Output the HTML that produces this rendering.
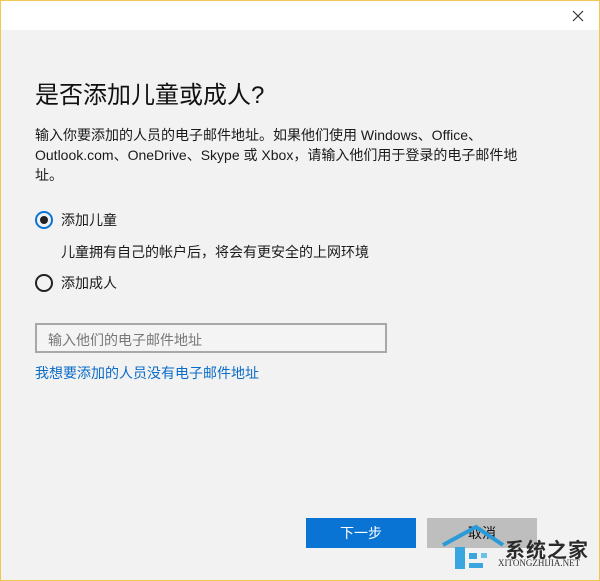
<!DOCTYPE html>
<html><head><meta charset="utf-8"><style>
*{margin:0;padding:0;box-sizing:border-box}
html,body{width:600px;height:581px;overflow:hidden}
body{background:#f2f2f2;font-family:"Liberation Sans","Noto Sans CJK SC",sans-serif;color:#1a1a1a;position:relative;border:1px solid #f0c850}
.bar{position:absolute;left:0;top:0;width:598px;height:29px;background:#fff}
.t{position:absolute;left:34px;top:74px;font-size:24px;color:#111}
.p{position:absolute;left:34px;top:124px;width:500px;font-size:14px;line-height:20px}
.r{position:absolute;left:34px;width:18px;height:18px;border:2px solid #222;border-radius:50%}
.r.on{border-color:#0a74d4}
.r.on::after{content:"";position:absolute;left:3px;top:3px;width:8px;height:8px;border-radius:50%;background:#222}
.l{position:absolute;font-size:14px}
.in{position:absolute;left:34px;top:322px;width:352px;height:30px;border:2px solid #a8a8a8;background:#f4f4f4;font-size:14px;color:#777;padding:5px 0 0 11px}
.lk{position:absolute;left:34px;top:362px;font-size:14px;color:#0a6cc8}
.b1{position:absolute;left:305px;top:517px;width:110px;height:30px;background:#0a74d4;color:#fff;font-size:14px;text-align:center;line-height:30px}
.b2{position:absolute;left:426px;top:517px;width:110px;height:30px;background:#bebebe;color:#111;font-size:14px;text-align:center;line-height:30px}
.wm1{position:absolute;left:504px;top:533px;font-size:20px;font-weight:bold;color:#2a2a2a;letter-spacing:1px}
.wm2{position:absolute;left:497px;top:557px;font-size:9px;color:#333;font-family:"Liberation Serif",serif}
</style></head><body>
<div class="bar"></div>
<svg style="position:absolute;left:571px;top:9px" width="12" height="12"><path d="M1 1L11 11M11 1L1 11" stroke="#333" stroke-width="1.2"/></svg>
<div class="t">是否添加儿童或成人?</div>
<div class="p">输入你要添加的人员的电子邮件地址。如果他们使用 Windows、Office、Outlook.com、OneDrive、Skype 或 Xbox，请输入他们用于登录的电子邮件地址。</div>
<div class="r on" style="top:210px"></div>
<div class="l" style="left:60px;top:209px">添加儿童</div>
<div class="l" style="left:60px;top:241px">儿童拥有自己的帐户后，将会有更安全的上网环境</div>
<div class="r" style="top:273px"></div>
<div class="l" style="left:60px;top:272px">添加成人</div>
<div class="in">输入他们的电子邮件地址</div>
<div class="lk">我想要添加的人员没有电子邮件地址</div>
<div class="b1">下一步</div>
<div class="b2">取消</div>
<svg style="position:absolute;left:440px;top:522px" width="70" height="55"><path d="M2 22 L35 4 L62 22" fill="none" stroke="#2a9ad8" stroke-width="4"/><rect x="14" y="24" width="10" height="22" fill="#3aa6e0"/><rect x="28" y="30" width="8" height="6" fill="#3aa6e0"/><rect x="40" y="30" width="6" height="5" fill="#6cc0ea"/><rect x="28" y="40" width="14" height="5" fill="#3aa6e0"/></svg>
<div class="wm1">系统之家</div>
<div class="wm2">XITONGZHIJIA.NET</div>
</body></html>
